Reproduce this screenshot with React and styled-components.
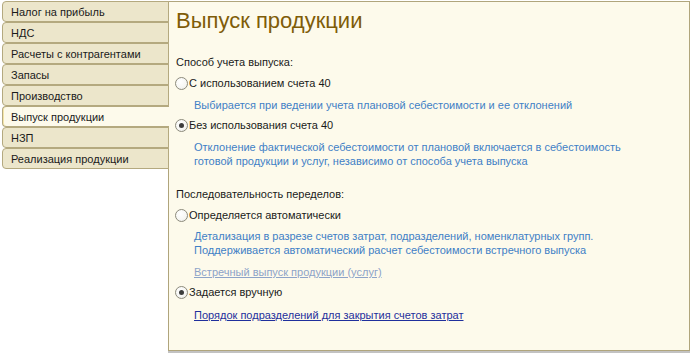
import React from "react";
import styled, { createGlobalStyle } from "styled-components";

const Global = createGlobalStyle`
  html, body { margin: 0; padding: 0; background: #ffffff; }
  body { font-family: "Liberation Sans", Arial, sans-serif; font-size: 11px; color: #1a1a1a; }
`;

const Root = styled.div`
  display: flex;
  align-items: flex-start;
  width: 692px;
  height: 353px;
  padding-top: 1px;
  box-sizing: border-box;
  overflow: hidden;
`;

const TabList = styled.div`
  display: flex;
  flex-direction: column;
  width: 167px;
  margin-left: 2px;
  margin-right: -1px;
  position: relative;
  z-index: 1;
`;

const Tab = styled.div`
  height: 19px;
  display: flex;
  align-items: center;
  padding-left: 8px;
  border: 1px solid #b4a97f;
  border-right: ${(p) => (p.$active ? "none" : "1px solid #b4a97f")};
  border-radius: 4px 0 0 4px;
  background: ${(p) => (p.$active ? "#fdfaeb" : "#ece6cb")};
  box-shadow: ${(p) => (p.$active ? "inset 1px 0 0 #f5e6a8" : "none")};
  font-size: 11px;
  color: #1a1a1a;
  white-space: nowrap;
`;

const PanelWrap = styled.div`
  flex: 1;
  margin-right: 2px;
  box-shadow: 0 2px 0 #c2c2c2;
`;

const Panel = styled.div`
  height: 350px;
  box-sizing: border-box;
  border: 1px solid #b0a57c;
  background: #fdfaeb;
  padding: 6px 0 0 7px;
  display: flex;
  flex-direction: column;
  align-items: flex-start;
`;

const Title = styled.h1`
  margin: 0;
  font-size: 22px;
  line-height: 26px;
  font-weight: normal;
  color: #7f5c08;
`;

const SectionLabel = styled.div`
  margin-top: ${(p) => p.$mt}px;
  line-height: 14px;
  font-size: 11px;
  color: #1a1a1a;
`;

const RadioRow = styled.label`
  display: flex;
  align-items: center;
  gap: 1px;
  height: 14px;
  margin-top: ${(p) => p.$mt}px;
  margin-left: -1px;
  font-size: 11px;
  color: #1a1a1a;
`;

const RadioCircle = styled.span`
  width: 11px;
  height: 11px;
  border-radius: 50%;
  border: 1px solid #8c8a7c;
  background: radial-gradient(circle at 40% 35%, #ffffff 0%, #f6f6f3 60%, #e6e5de 100%);
  display: flex;
  align-items: center;
  justify-content: center;
  flex: none;
`;

const RadioDot = styled.span`
  width: 5px;
  height: 5px;
  border-radius: 50%;
  background: #3c3c3c;
`;

const Hint = styled.div`
  margin-top: ${(p) => p.$mt}px;
  margin-left: 18px;
  font-size: 11px;
  line-height: 14px;
  color: #3f80c6;
`;

const Link = styled.a`
  margin-top: ${(p) => p.$mt}px;
  margin-left: 18px;
  font-size: 11px;
  line-height: 14px;
  color: ${(p) => (p.$muted ? "#8da3c8" : "#1f2f9c")};
  text-decoration: underline;
  cursor: pointer;
`;

const Radio = ({ checked, children, mt }) => (
  <RadioRow $mt={mt}>
    <RadioCircle>{checked && <RadioDot />}</RadioCircle>
    <span>{children}</span>
  </RadioRow>
);

const tabs = [
  "Налог на прибыль",
  "НДС",
  "Расчеты с контрагентами",
  "Запасы",
  "Производство",
  "Выпуск продукции",
  "НЗП",
  "Реализация продукции",
];

export default function App() {
  return (
    <>
      <Global />
      <Root>
        <TabList>
          {tabs.map((t) => (
            <Tab key={t} $active={t === "Выпуск продукции"}>
              {t}
            </Tab>
          ))}
        </TabList>
        <PanelWrap>
          <Panel>
            <Title>Выпуск продукции</Title>
            <SectionLabel $mt={21}>Способ учета выпуска:</SectionLabel>
            <Radio mt={7}>С использованием счета 40</Radio>
            <Hint $mt={8}>
              Выбирается при ведении учета плановой себестоимости и ее отклонений
            </Hint>
            <Radio mt={6} checked>
              Без использования счета 40
            </Radio>
            <Hint $mt={8}>
              Отклонение фактической себестоимости от плановой включается в себестоимость
              <br />
              готовой продукции и услуг, независимо от способа учета выпуска
            </Hint>
            <SectionLabel $mt={19}>Последовательность переделов:</SectionLabel>
            <Radio mt={7}>Определяется автоматически</Radio>
            <Hint $mt={7}>
              Детализация в разрезе счетов затрат, подразделений, номенклатурных групп.
              <br />
              Поддерживается автоматический расчет себестоимости встречного выпуска
            </Hint>
            <Link $mt={8} $muted>
              Встречный выпуск продукции (услуг)
            </Link>
            <Radio mt={6} checked>
              Задается вручную
            </Radio>
            <Link $mt={9}>Порядок подразделений для закрытия счетов затрат</Link>
          </Panel>
        </PanelWrap>
      </Root>
    </>
  );
}
